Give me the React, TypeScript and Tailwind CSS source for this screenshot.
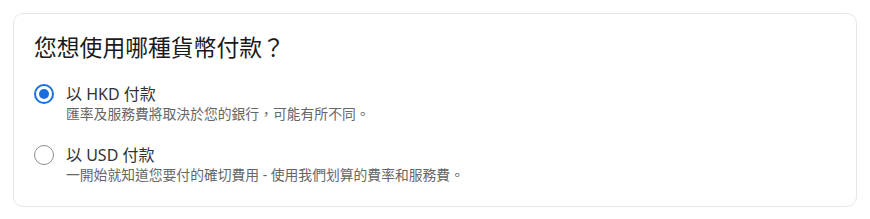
import { useState } from "react";

const OPTIONS = [
    {
        id: "HKD",
        label: "以 HKD 付款",
        desc: "匯率及服務費將取決於您的銀行，可能有所不同。",
    },
    {
        id: "USD",
        label: "以 USD 付款",
        desc: "一開始就知道您要付的確切費用 - 使用我們划算的費率和服務費。",
    },
];

export default function App() {
    const [selected, setSelected] = useState("HKD");

    return (
        <div
            className="min-h-screen bg-white p-[13px]"
            style={{ fontFamily: '"Noto Sans", "Noto Sans CJK TC", sans-serif' }}
        >
            <div className="w-[844px] rounded-[10px] border border-[#e6e6e6] bg-white px-5 pt-5 pb-[22px]">
                <h2 className="text-[22.8px] leading-[28px] font-normal text-[#1a1a1a]">
                    您想使用哪種貨幣付款？
                </h2>

                <div className="mt-[21px] flex flex-col gap-[21px]">
                    {OPTIONS.map((opt) => {
                        const checked = selected === opt.id;
                        return (
                            <label
                                key={opt.id}
                                className="flex items-start gap-3 cursor-pointer"
                                onClick={() => setSelected(opt.id)}
                            >
                                <span className="flex h-[22px] items-center">
                                    {checked ? (
                                        <span className="flex h-5 w-5 items-center justify-center rounded-full border-2 border-[#1a6fe0]">
                                            <span className="h-[10px] w-[10px] rounded-full bg-[#1a6fe0]" />
                                        </span>
                                    ) : (
                                        <span className="h-5 w-5 rounded-full border-[1.5px] border-[#8c8c8c]" />
                                    )}
                                </span>
                                <span className="flex flex-col">
                                    <span className="text-base leading-[22px] text-[#333333]">
                                        {opt.label}
                                    </span>
                                    <span className="text-[13.8px] leading-[18px] text-[#666666]">
                                        {opt.desc}
                                    </span>
                                </span>
                            </label>
                        );
                    })}
                </div>
            </div>
        </div>
    );
}
